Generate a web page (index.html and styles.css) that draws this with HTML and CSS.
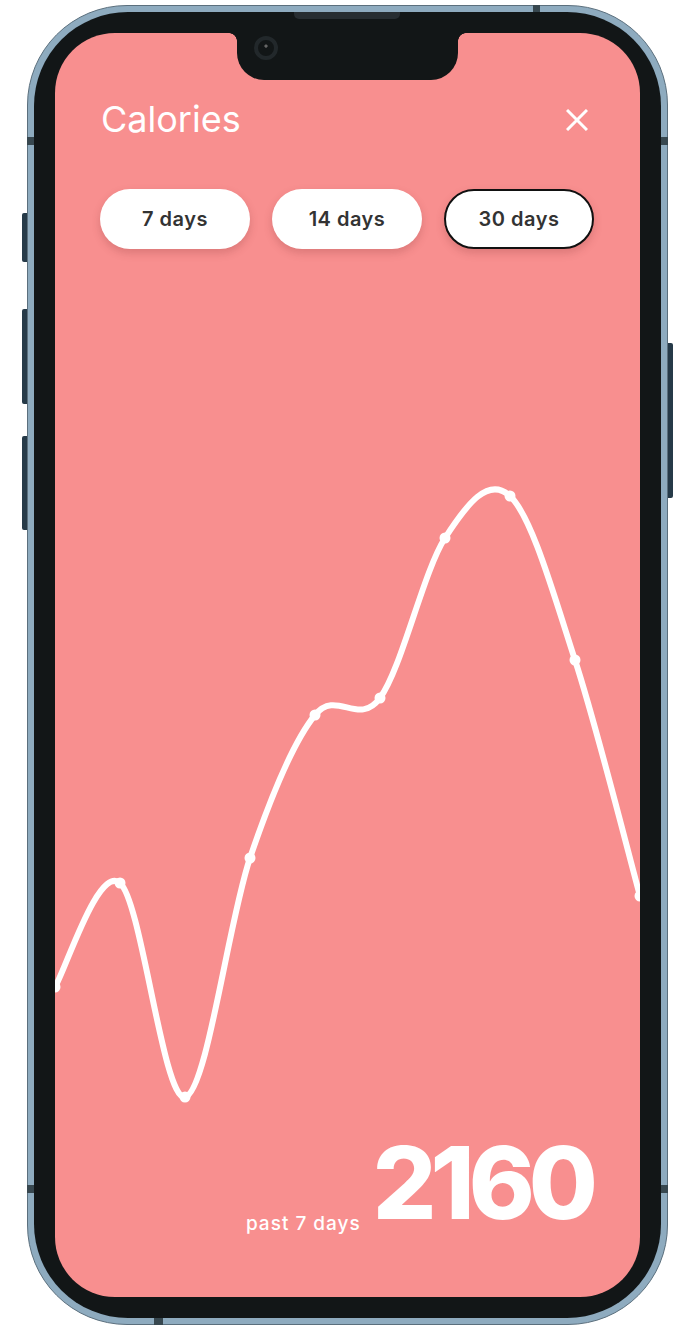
FILE: index.html
```html
<!DOCTYPE html>
<html lang="en">
<head>
    <meta charset="UTF-8">
    <meta name="viewport" content="width=device-width, initial-scale=1.0">
    <title>Calories</title>
    <link rel="stylesheet" href="styles.css">
</head>
<body>
    <div class="phone">
        <span class="side-btn left b1"></span>
        <span class="side-btn left b2"></span>
        <span class="side-btn left b3"></span>
        <span class="side-btn right b4"></span>
        <span class="band band-l1"></span>
        <span class="band band-l2"></span>
        <span class="band band-r1"></span>
        <span class="band band-r2"></span>
        <span class="band band-top"></span>
        <span class="band band-bottom"></span>

        <div class="bezel">
            <span class="speaker"></span>
            <div class="screen">
                <div class="notch">
                    <span class="camera"></span>
                </div>

                <header class="header">
                    <h1 class="title">Calories</h1>
                    <button class="close" aria-label="Close">
                        <svg width="22" height="22" viewBox="0 0 22 22">
                            <path d="M1 1 L21 21 M21 1 L1 21" stroke="#fff" stroke-width="3" fill="none"/>
                        </svg>
                    </button>
                </header>

                <div class="ranges">
                    <button class="range">7 days</button>
                    <button class="range">14 days</button>
                    <button class="range active">30 days</button>
                </div>

                <!-- chart uses page coordinates in its viewBox -->
                <svg class="chart" width="585" height="870" viewBox="55 260 585 870">
                    <path d="M55 987 C65.8 969.7 98.3 864.7 120 883 C141.7 901.3 163.3 1101.2 185 1097 C206.7 1092.8 228.3 921.7 250 858 C271.7 794.3 293.3 741.7 315 715 C336.7 688.3 358.3 727.5 380 698 C401.7 668.5 423.3 571.7 445 538 C466.7 504.3 488.3 475.7 510 496 C531.7 516.3 553.3 593.3 575 660 C596.7 726.7 629.2 856.7 640 896"
                          fill="none" stroke="#fff" stroke-width="6" stroke-linecap="round"/>
                    <g fill="#fff">
                        <circle cx="55" cy="987" r="5.5"/>
                        <circle cx="120" cy="883" r="5.5"/>
                        <circle cx="185" cy="1097" r="5.5"/>
                        <circle cx="250" cy="858" r="5.5"/>
                        <circle cx="315" cy="715" r="5.5"/>
                        <circle cx="380" cy="698" r="5.5"/>
                        <circle cx="445" cy="538" r="5.5"/>
                        <circle cx="510" cy="496" r="5.5"/>
                        <circle cx="575" cy="660" r="5.5"/>
                        <circle cx="640" cy="896" r="5.5"/>
                    </g>
                </svg>

                <footer class="total">
                    <span class="total-label">past 7 days</span>
                    <span class="total-value">2160</span>
                </footer>
            </div>
        </div>
    </div>
</body>
</html>
```

FILE: styles.css
```css
body {
    margin: 0;
    background: #fff;
    font-family: "Inter", "Liberation Sans", sans-serif;
}

.phone {
    position: relative;
    display: flex;
    box-sizing: border-box;
    width: 641px;
    height: 1320px;
    margin: 5px 0 0 27px;
    padding: 6px 6px 6px 6px;
    border: 1px solid #5b6f7d;
    border-radius: 100px;
    background: #8eabbf;
}

.side-btn {
    position: absolute;
    width: 5px;
    background: #263a48;
    border-radius: 2px;
}
.side-btn.left { left: -6px; border-radius: 2px 0 0 2px; }
.side-btn.right { right: -6px; border-radius: 0 2px 2px 0; }
.b1 { top: 207px; height: 49px; }
.b2 { top: 303px; height: 95px; }
.b3 { top: 430px; height: 94px; }
.b4 { top: 337px; height: 155px; }

.band {
    position: absolute;
    background: #37474f;
}
.band-l1, .band-l2 { left: -1px; width: 7px; height: 8px; }
.band-r1, .band-r2 { right: -1px; width: 7px; height: 8px; }
.band-l1, .band-r1 { top: 131px; }
.band-l2, .band-r2 { top: 1179px; }
.band-top { top: -1px; left: 505px; width: 7px; height: 7px; }
.band-bottom { bottom: -1px; left: 126px; width: 9px; height: 7px; }

.bezel {
    position: relative;
    flex: 1;
    display: flex;
    padding: 21px;
    border-radius: 94px;
    background: #121617;
}

.speaker {
    position: absolute;
    top: 0;
    left: 260px;
    width: 106px;
    height: 7px;
    background: #272d31;
    border-radius: 0 0 5px 5px;
}

.screen {
    position: relative;
    flex: 1;
    display: flex;
    flex-direction: column;
    overflow: hidden;
    border-radius: 60px;
    background: #f88f8f;
}

.notch {
    position: absolute;
    top: 0;
    left: 182px;
    width: 221px;
    height: 47px;
    background: #121617;
    border-radius: 0 0 27px 27px;
    z-index: 2;
}
.notch::before,
.notch::after {
    content: "";
    position: absolute;
    top: 0;
    width: 8px;
    height: 8px;
}
.notch::before {
    left: -8px;
    background: radial-gradient(circle at 0 100%, transparent 7.5px, #121617 8px);
}
.notch::after {
    right: -8px;
    background: radial-gradient(circle at 100% 100%, transparent 7.5px, #121617 8px);
}

.camera {
    position: absolute;
    top: 3px;
    left: 17px;
    width: 24px;
    height: 24px;
    box-sizing: border-box;
    border: 4px solid #22282b;
    border-radius: 50%;
    background: radial-gradient(circle at 50% 38%, #666 1.2px, #121617 2px);
}

.header {
    display: flex;
    justify-content: space-between;
    align-items: center;
    padding: 65px 52px 0 46px;
}

.title {
    margin: 0;
    color: #fff;
    font-size: 36px;
    font-weight: 400;
    line-height: 43px;
}

.close {
    display: block;
    padding: 0;
    border: none;
    background: none;
    cursor: pointer;
}
.close svg {
    display: block;
}

.ranges {
    display: flex;
    gap: 22px;
    margin-top: 48px;
    padding: 0 45px;
}

.range {
    box-sizing: border-box;
    width: 150px;
    height: 60px;
    border: none;
    border-radius: 30px;
    background: #fff;
    color: #333;
    font-family: inherit;
    font-size: 20px;
    font-weight: 600;
    letter-spacing: 0.5px;
    box-shadow: 0 4px 8px rgba(120, 40, 40, 0.22);
    cursor: pointer;
}
.range.active {
    border: 2px solid #111;
}

.chart {
    display: block;
    margin-top: 11px;
}

.total {
    display: flex;
    justify-content: flex-end;
    align-items: flex-end;
    gap: 12px;
    margin-top: 3px;
    padding: 0 48px;
    color: #fff;
}

.total-label {
    font-size: 19px;
    font-weight: 500;
    line-height: 1;
    letter-spacing: 1px;
}

.total-value {
    font-size: 100px;
    font-weight: 800;
    line-height: 1;
    letter-spacing: -6px;
}
```
